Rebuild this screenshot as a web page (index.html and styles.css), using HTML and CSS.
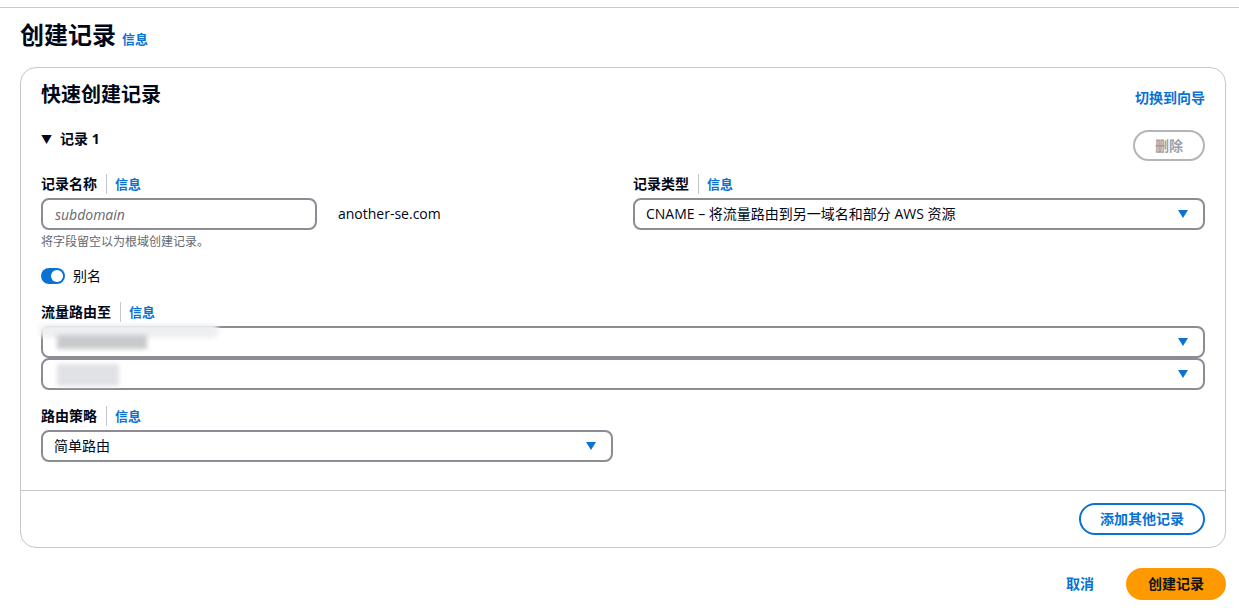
FILE: index.html
```html
<!DOCTYPE html>
<html lang="zh-CN">
<head>
    <meta charset="UTF-8">
    <meta name="viewport" content="width=device-width, initial-scale=1.0">
    <title>创建记录</title>
    <link rel="stylesheet" href="styles.css">
</head>
<body>
    <div class="topbar"></div>
    <div class="page">
        <div class="page-header">
            <h1>创建记录</h1>
            <a class="info" href="#">信息</a>
        </div>

        <div class="card">
            <div class="card-body">
                <div class="card-header">
                    <h2>快速创建记录</h2>
                    <a class="link-strong" href="#">切换到向导</a>
                </div>

                <div class="record-head">
                    <div class="expander"><span class="tri">&#9660;</span>记录 1</div>
                    <button class="btn btn-disabled" disabled>删除</button>
                </div>

                <div class="grid">
                    <div class="field">
                        <div class="label">记录名称<span class="sep"></span><a class="info" href="#">信息</a></div>
                        <div class="name-row">
                            <input class="input" type="text" placeholder="subdomain">
                            <span class="suffix">another-se.com</span>
                        </div>
                        <div class="hint">将字段留空以为根域创建记录。</div>
                    </div>
                    <div class="field">
                        <div class="label">记录类型<span class="sep"></span><a class="info" href="#">信息</a></div>
                        <div class="select">
                            <span>CNAME – 将流量路由到另一域名和部分 AWS 资源</span>
                            <span class="caret"></span>
                        </div>
                    </div>
                </div>

                <div class="toggle-row">
                    <span class="toggle"><span class="knob"></span></span>
                    <span>别名</span>
                </div>

                <div class="field">
                    <div class="label">流量路由至<span class="sep"></span><a class="info" href="#">信息</a></div>
                    <div class="select select-stack">
                        <span class="blur blur-a"></span>
                        <span class="blur blur-b"></span>
                        <span class="caret"></span>
                    </div>
                    <div class="select select-stack">
                        <span class="blur blur-c"></span>
                        <span class="caret"></span>
                    </div>
                </div>

                <div class="field field-policy">
                    <div class="label">路由策略<span class="sep"></span><a class="info" href="#">信息</a></div>
                    <div class="select">
                        <span>简单路由</span>
                        <span class="caret"></span>
                    </div>
                </div>
            </div>
            <div class="card-footer">
                <button class="btn btn-normal">添加其他记录</button>
            </div>
        </div>

        <div class="actions">
            <button class="btn btn-link">取消</button>
            <button class="btn btn-primary">创建记录</button>
        </div>
    </div>
</body>
</html>
```

FILE: styles.css
```css
/* Route 53 quick create */
body {
    margin: 0;
    font-family: "Open Sans", "Noto Sans CJK SC", sans-serif;
    font-size: 14px;
    line-height: 20px;
    color: #000716;
    background: #fff;
}

a {
    text-decoration: none;
}

.topbar {
    height: 7px;
    border-bottom: 1px solid #c6c6cd;
}

.page {
    padding: 0 13px 0 20px;
}

.page-header {
    display: flex;
    align-items: baseline;
    gap: 6px;
    margin-top: 11px;
    margin-bottom: 16px;
}

.page-header h1 {
    margin: 0;
    font-size: 24px;
    line-height: 32px;
    font-weight: bold;
}

.info {
    color: #0972d3;
    font-size: 13px;
    font-weight: bold;
}

.card {
    border: 1px solid #c6c6cd;
    border-radius: 16px;
}

.card-body {
    padding: 15px 20px 28px;
    border-bottom: 1px solid #c6c6cd;
}

.card-header {
    display: flex;
    justify-content: space-between;
    align-items: flex-end;
}

.card-header h2 {
    margin: 0;
    font-size: 20px;
    line-height: 24px;
    font-weight: bold;
}

.link-strong {
    color: #0972d3;
    font-weight: bold;
    font-size: 14px;
    line-height: 20px;
    margin-bottom: -1px;
}

.record-head {
    display: flex;
    justify-content: space-between;
    align-items: flex-start;
    margin-top: 23px;
}

.expander {
    font-weight: bold;
    font-size: 14px;
    line-height: 20px;
    margin-top: -1px;
}

.tri {
    font-size: 11px;
    margin-right: 8px;
}

.btn {
    font-family: inherit;
    font-size: 14px;
    font-weight: bold;
    line-height: 20px;
    height: 32px;
    padding: 0 18px;
    border-radius: 20px;
    border: 2px solid transparent;
    background: #fff;
    cursor: pointer;
}

.btn-disabled {
    height: 31px;
    padding: 0 20px;
    border-color: #b4b4bb;
    color: #9ba0a8;
    cursor: default;
}

.btn-normal {
    border-color: #0972d3;
    color: #0972d3;
    padding: 0 19px;
}

.btn-link {
    color: #0972d3;
    padding: 0 14px;
}

.btn-primary {
    background: #ff9900;
    border-color: #ff9900;
    color: #0f141a;
    padding: 0 20px;
}

.grid {
    display: grid;
    grid-template-columns: 1fr 1fr;
    gap: 20px;
    margin-top: 13px;
}

.field {
    margin-top: 16px;
}

.grid .field {
    margin-top: 0;
}

.label {
    display: flex;
    align-items: center;
    font-weight: bold;
    font-size: 14px;
    line-height: 20px;
    margin-bottom: 4px;
}

.sep {
    width: 1px;
    height: 20px;
    background: #c6c6cd;
    margin: 0 8px 0 9px;
}

.name-row {
    display: flex;
    align-items: center;
    gap: 21px;
}

.input {
    width: 276px;
    height: 32px;
    box-sizing: border-box;
    border: 2px solid #8c8c94;
    border-radius: 8px;
    padding: 0 12px;
    font-family: inherit;
    font-size: 14px;
}

.input::placeholder {
    color: #656871;
    font-style: italic;
}

.suffix {
    font-size: 14px;
}

.hint {
    margin-top: 4px;
    font-size: 12px;
    line-height: 16px;
    color: #656871;
}

.select {
    position: relative;
    display: flex;
    justify-content: space-between;
    align-items: center;
    height: 32px;
    box-sizing: border-box;
    border: 2px solid #8c8c94;
    border-radius: 8px;
    padding: 0 15px 0 11px;
    font-size: 14px;
}

.select-stack {
    justify-content: flex-end;
}

.caret {
    width: 0;
    height: 0;
    border-left: 5.5px solid transparent;
    border-right: 5.5px solid transparent;
    border-top: 8px solid #0972d3;
}

.toggle-row {
    display: flex;
    align-items: center;
    gap: 8px;
    margin-top: 16px;
    font-size: 14px;
}

.toggle {
    position: relative;
    width: 24px;
    height: 16px;
    border-radius: 8px;
    background: #0972d3;
}

.knob {
    position: absolute;
    top: 2px;
    right: 2px;
    width: 12px;
    height: 12px;
    border-radius: 50%;
    background: #fff;
}

/* masked values */
.blur {
    position: absolute;
    filter: blur(2px);
}

.blur-a {
    left: -4px;
    top: -4px;
    width: 180px;
    height: 14px;
    background: #eeeff1;
    border-radius: 8px;
}

.blur-b {
    left: 14px;
    top: 7px;
    width: 90px;
    height: 14px;
    background: #c9cacd;
}

.blur-c {
    left: 14px;
    top: 4px;
    width: 62px;
    height: 22px;
    background: #e1e2e5;
}

.field-policy .select {
    width: 572px;
}

.card-footer {
    display: flex;
    justify-content: flex-end;
    padding: 12px 20px 12px;
}

.actions {
    display: flex;
    justify-content: flex-end;
    gap: 16px;
    margin-top: 20px;
}
```
